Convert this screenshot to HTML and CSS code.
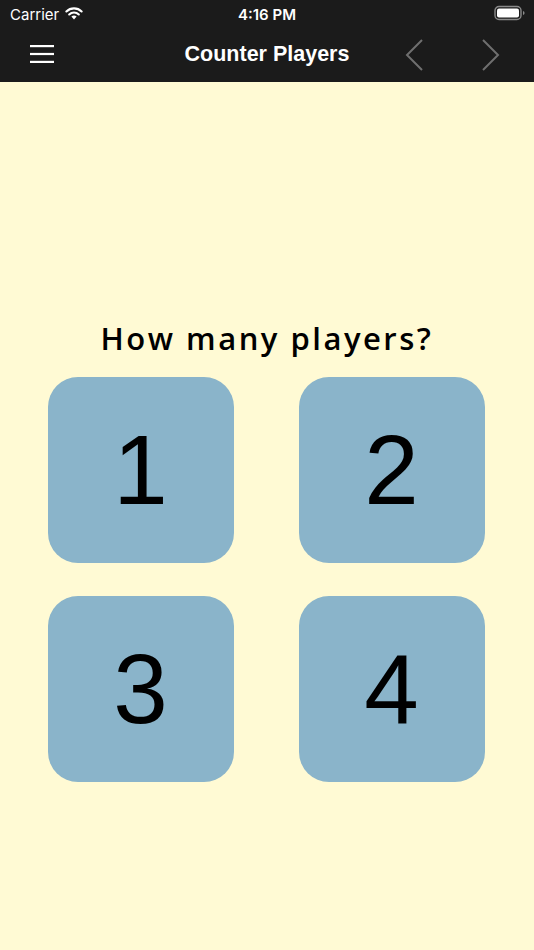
FILE: index.html
```html
<!DOCTYPE html>
<html>
<head>
<meta charset="utf-8">
<link rel="stylesheet" href="styles.css">
</head>
<body>
<header class="top">
  <div class="status">
    <div class="status-left">
      <span class="carrier">Carrier</span>
      <svg class="wifi" width="18" height="13" viewBox="0 0 18 13">
        <path d="M9 12.5 L6.4 9.6 A3.8 3.8 0 0 1 11.6 9.6 Z" fill="#fff"/>
        <path d="M4.2 7.4 A6.9 6.9 0 0 1 13.8 7.4" stroke="#fff" stroke-width="2.1" fill="none" stroke-linecap="round"/>
        <path d="M1.4 4.5 A10.8 10.8 0 0 1 16.6 4.5" stroke="#fff" stroke-width="2.1" fill="none" stroke-linecap="round"/>
      </svg>
    </div>
    <span class="time">4:16 PM</span>
    <div class="status-right">
      <svg class="battery" width="32" height="16" viewBox="0 0 32 16">
        <rect x="1" y="1.5" width="26" height="13" rx="4" fill="none" stroke="#8a8a8a" stroke-width="1.4"/>
        <rect x="3" y="3.5" width="22" height="9" rx="2" fill="#fff"/>
        <path d="M29 6 Q30.6 6.5 30.6 8 Q30.6 9.5 29 10 Z" fill="#8a8a8a"/>
      </svg>
    </div>
  </div>
  <nav class="navbar">
    <svg class="menu" width="26" height="20" viewBox="0 0 26 20">
      <rect x="1" y="1" width="24" height="2.2" fill="#fff"/>
      <rect x="1" y="8.9" width="24" height="2.2" fill="#fff"/>
      <rect x="1" y="16.8" width="24" height="2.2" fill="#fff"/>
    </svg>
    <h1 class="nav-title">Counter Players</h1>
    <div class="arrows">
      <svg width="20" height="32" viewBox="0 0 20 32"><path d="M17 1 L2 16 L17 31" stroke="#6f6f6f" stroke-width="2" fill="none"/></svg>
      <svg width="20" height="32" viewBox="0 0 20 32"><path d="M3 1 L18 16 L3 31" stroke="#6f6f6f" stroke-width="2" fill="none"/></svg>
    </div>
  </nav>
</header>
<main class="content">
  <h2 class="question">How many players?</h2>
  <div class="grid">
    <button class="tile">1</button>
    <button class="tile">2</button>
    <button class="tile">3</button>
    <button class="tile">4</button>
  </div>
</main>
</body>
</html>
```
FILE: styles.css
```css
* { box-sizing: border-box; }
html, body { margin: 0; padding: 0; }
body {
  width: 534px;
  height: 950px;
  background: #fffad4;
  font-family: "Liberation Sans", Arial, sans-serif;
  overflow: hidden;
}
.top {
  background: #1b1b1b;
  height: 82px;
  color: #fff;
}
.status {
  height: 28px;
  display: flex;
  align-items: center;
  justify-content: space-between;
  padding: 0 8px 0 10px;
  position: relative;
}
.status-left { display: flex; align-items: center; gap: 6px; }
.carrier { font-family: "Inter", "Liberation Sans", sans-serif; font-size: 15px; }
.wifi { margin-top: -2px; }
.time {
  font-family: "Inter", "Liberation Sans", sans-serif;
  font-size: 15px;
  font-weight: 600;
  position: absolute;
  left: 0; right: 0;
  text-align: center;
  top: 5px;
}
.status-right { display: flex; align-items: center; margin-top: -2px; }
.navbar {
  height: 54px;
  display: flex;
  align-items: center;
  justify-content: space-between;
  padding: 0 34px 0 29px;
  position: relative;
}
.menu { margin-top: -2px; }
.nav-title {
  position: absolute;
  left: 0; right: 0;
  text-align: center;
  margin: 0;
  font-size: 21.5px;
  font-weight: 700;
  top: 14px;
  pointer-events: none;
}
.arrows { display: flex; gap: 55px; margin-top: 0; }
.content {
  display: flex;
  flex-direction: column;
  align-items: center;
  padding-top: 235px;
}
.question {
  margin: 0 0 18px 0;
  font-family: "Open Sans", "Lato", sans-serif;
  font-weight: 600;
  font-size: 31px;
  letter-spacing: 2.5px;
  line-height: 42px;
  color: #000;
}
.grid {
  display: grid;
  grid-template-columns: 186px 186px;
  grid-auto-rows: 186px;
  column-gap: 65px;
  row-gap: 33px;
  margin-left: -2px;
}
.tile {
  border: none;
  border-radius: 30px;
  background: #8ab4ca;
  font-family: "Liberation Sans", Arial, sans-serif;
  font-size: 98px;
  color: #000;
  padding: 0;
  display: flex;
  align-items: center;
  justify-content: center;
}
```
